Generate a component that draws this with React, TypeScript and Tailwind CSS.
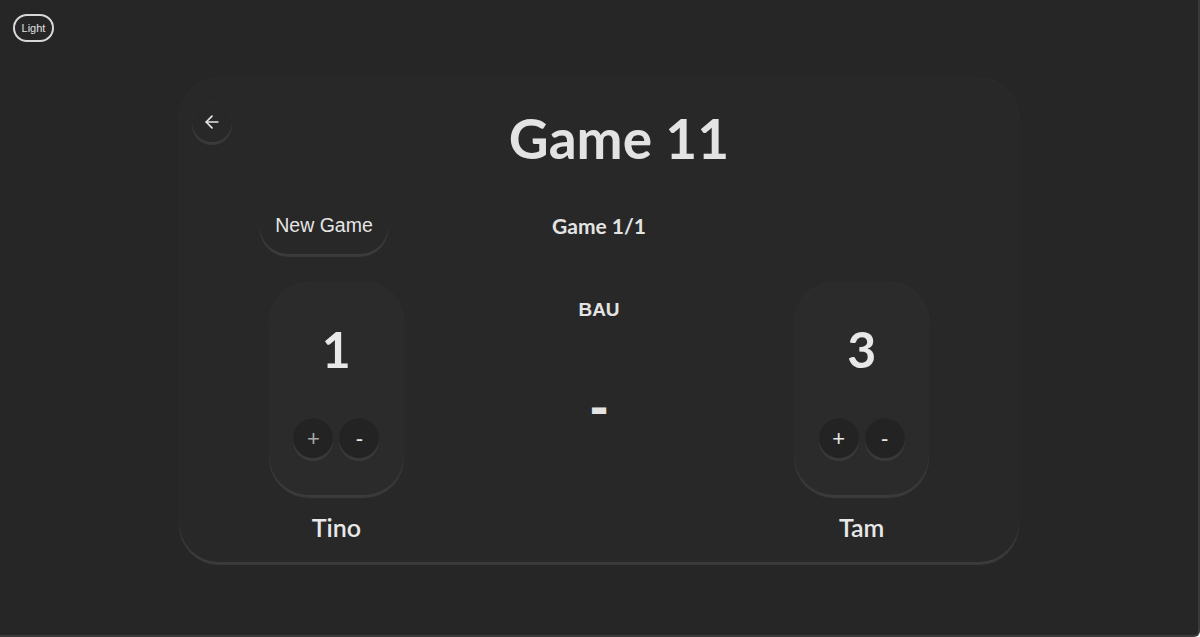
import { useState } from 'react';

const raised =
  'bg-[#282828] shadow-[0_3px_1px_#3b3b3b,0_0_1px_#3a3a3a]';

function RoundButton({
  label,
  dim,
  onClick,
}: {
  label: string;
  dim?: boolean;
  onClick: () => void;
}) {
  return (
    <button
      onClick={onClick}
      className={`flex h-10 w-10 items-center justify-center rounded-full bg-[#232323] shadow-[0_3px_1px_#3a3a3a,0_0_1px_#3a3a3a] text-[22px] ${
        dim ? 'text-[#a8a8a8]' : 'text-[#e6e6e6]'
      }`}
      style={{ fontFamily: '"Liberation Sans", Arial, sans-serif' }}
    >
      {label}
    </button>
  );
}

function ScoreCard({
  name,
  score,
  setScore,
}: {
  name: string;
  score: number;
  setScore: (n: number) => void;
}) {
  return (
    <div className="flex flex-col items-center">
      <div className="flex h-[213px] w-[135px] flex-col items-center rounded-[40px] bg-[#2b2b2b] shadow-[0_3px_1px_#3b3b3b,0_0_1px_#3a3a3a]">
        <div className="mt-[42px] text-[50px] font-bold leading-none text-[#e8e8e8]">
          {score}
        </div>
        <div className="mt-[44px] flex gap-[6px]">
          <RoundButton label="+" dim={score === 1} onClick={() => setScore(score + 1)} />
          <RoundButton label="-" onClick={() => setScore(Math.max(0, score - 1))} />
        </div>
      </div>
      <div className="mt-[20px] text-[25px] font-semibold leading-none text-[#e8e8e8]">
        {name}
      </div>
    </div>
  );
}

export default function App() {
  const [theme, setTheme] = useState<'dark' | 'light'>('dark');
  const [tino, setTino] = useState(1);
  const [tam, setTam] = useState(3);

  return (
    <div
      className="h-[637px] w-full border-r-2 border-b-2 border-[#3a3a3a] rounded-br-[6px] bg-[#262626] text-[#e8e8e8]"
      style={{ fontFamily: 'Lato, "Noto Sans", sans-serif' }}
    >
      <div className="px-[13px] pt-[14px]">
        <button
          onClick={() => setTheme(theme === 'dark' ? 'light' : 'dark')}
          className="flex h-[28px] w-[41px] items-center justify-center rounded-full border-2 border-[#d8d8d8] text-[11px] text-[#e0e0e0]"
          style={{ fontFamily: '"Liberation Sans", Arial, sans-serif' }}
        >
          Light
        </button>
      </div>

      <div className="flex justify-center pt-[36px]">
        <div className={`relative h-[484px] w-[840px] rounded-[40px] ${raised}`}>
          <button
            className={`absolute left-[13px] top-[24px] flex h-10 w-10 items-center justify-center rounded-full ${raised}`}
          >
            <svg width="20" height="20" viewBox="0 0 24 24" fill="none" stroke="#e6e6e6" strokeWidth="2" strokeLinecap="round" strokeLinejoin="round">
              <path d="M19 12H5" />
              <path d="M12 19l-7-7 7-7" />
            </svg>
          </button>

          <h1 className="pl-[40px] pt-[28px] text-center text-[55px] font-bold leading-[64px] text-[#e3e3e3]">
            Game 11
          </h1>

          <div className="mt-[28px] grid grid-cols-3 px-[26px]">
            <div className="flex justify-start pl-[55px]">
              <button
                className={`h-[56px] w-[128px] rounded-full text-[19.5px] text-[#e6e6e6] ${raised}`}
                style={{ fontFamily: '"Liberation Sans", Arial, sans-serif' }}
              >
                New Game
              </button>
            </div>
            <div className="flex items-center justify-center text-[21px] font-bold text-[#e3e3e3]">
              Game 1/1
            </div>
            <div />
          </div>

          <div className="mt-[28px] grid grid-cols-3 px-[26px]">
            <ScoreCard name="Tino" score={tino} setScore={setTino} />
            <div className="flex flex-col items-center">
              <div
                className="mt-[18px] text-[19px] font-bold leading-none text-[#e3e3e3]"
                style={{ fontFamily: '"Liberation Sans", Arial, sans-serif' }}
              >
                BAU
              </div>
              <div
                className="mt-[66px] text-[46px] font-bold leading-none text-[#e3e3e3]"
                style={{ fontFamily: '"DejaVu Sans", sans-serif' }}
              >
                -
              </div>
            </div>
            <ScoreCard name="Tam" score={tam} setScore={setTam} />
          </div>
        </div>
      </div>
    </div>
  );
}
